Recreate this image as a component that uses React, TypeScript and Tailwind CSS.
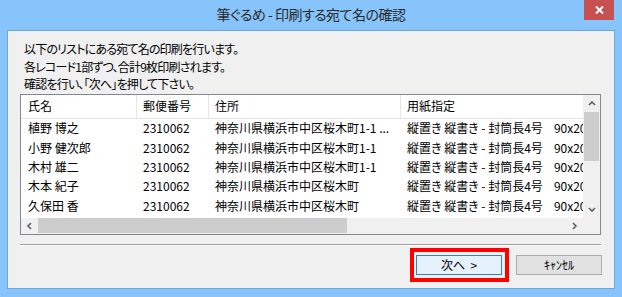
import React from "react";

const rows = [
  { name: "植野 博之", zip: "2310062", addr: "神奈川県横浜市中区桜木町1-1 ..." },
  { name: "小野 健次郎", zip: "2310062", addr: "神奈川県横浜市中区桜木町1-1" },
  { name: "木村 雄二", zip: "2310062", addr: "神奈川県横浜市中区桜木町1-1" },
  { name: "木本 紀子", zip: "2310062", addr: "神奈川県横浜市中区桜木町" },
  { name: "久保田 香", zip: "2310062", addr: "神奈川県横浜市中区桜木町" },
];

function Chevron({ dir }: { dir: "up" | "down" | "left" | "right" }) {
  const d =
    dir === "up"
      ? "M1 5 L4 2 L7 5"
      : dir === "down"
      ? "M1 2 L4 5 L7 2"
      : dir === "left"
      ? "M5 1 L2 4 L5 7"
      : "M2 1 L5 4 L2 7";
  const w = dir === "up" || dir === "down" ? 8 : 7;
  const h = dir === "up" || dir === "down" ? 7 : 8;
  return (
    <svg width={w} height={h} viewBox={`0 0 ${w} ${h}`}>
      <path d={d} fill="none" stroke="#606060" strokeWidth="1.6" />
    </svg>
  );
}

export default function App() {
  return (
    <div className="w-[622px] h-[297px] bg-[#86c4fb] flex flex-col font-['Noto_Sans_CJK_JP','Noto_Sans',sans-serif] [font-feature-settings:'palt'] overflow-hidden">
      <div className="h-[30px] relative flex items-start justify-center">
        <span className="text-[14px] leading-[15px] mt-[7px] text-[#2b2b2b] tracking-[-0.5px]">筆ぐるめ - 印刷する宛て名の確認</span>
        <div className="absolute right-[8px] top-0 w-[30px] h-[20px] bg-[#c75050] flex items-center justify-center">
          <svg width="9" height="8" viewBox="0 0 9 8">
            <path d="M1 0.5 L8 7.5 M8 0.5 L1 7.5" stroke="#ffffff" strokeWidth="2" />
          </svg>
        </div>
      </div>
      <div className="mx-[7px] mb-[8px] flex-1 bg-[#f0f0f0] border border-[#6fa7db] flex flex-col text-[12px] text-black">
        <div className="pl-[16px] pt-[9px] leading-[17.5px] tracking-[-0.8px]">
          <div>以下のリストにある宛て名の印刷を行います。</div>
          <div>各レコード1部ずつ、合計9枚印刷されます。</div>
          <div>確認を行い、「次へ」を押して下さい。</div>
        </div>
        <div className="ml-[12px] mr-[13px] mt-[1px] h-[141px] border border-[#828790] bg-white flex flex-col">
          <div className="flex flex-1 min-h-0">
            <div className="flex-1 min-w-0 overflow-hidden flex flex-col">
              <div className="flex h-[24px] border-b border-[#e5e5e5] shrink-0">
                <div className="w-[116px] shrink-0 border-r border-[#e5e5e5] pl-[7px] flex items-center">氏名</div>
                <div className="w-[72px] shrink-0 border-r border-[#e5e5e5] pl-[6px] flex items-center">郵便番号</div>
                <div className="w-[192px] shrink-0 border-r border-[#e5e5e5] pl-[6px] flex items-center">住所</div>
                <div className="flex-1 pl-[6px] flex items-center whitespace-nowrap">用紙指定</div>
              </div>
              {rows.map((r, i) => (
                <div key={i} className="flex h-[19.4px] items-center shrink-0 whitespace-nowrap">
                  <div className="w-[116px] shrink-0 pl-[7px]">{r.name}</div>
                  <div className="w-[72px] shrink-0 pl-[6px]">{r.zip}</div>
                  <div className="w-[192px] shrink-0 pl-[6px] overflow-hidden">{r.addr}</div>
                  <div className="flex-1 pl-[6px] overflow-hidden">
                    <span>縦置き 縦書き - 封筒長4号</span>
                    <span className="ml-[11px]">90x205mm</span>
                  </div>
                </div>
              ))}
            </div>
            <div className="w-[17px] shrink-0 bg-[#f0f0f0] flex flex-col">
              <div className="h-[17px] flex items-center justify-center">
                <Chevron dir="up" />
              </div>
              <div className="mx-[1px] h-[49px] bg-[#cdcdcd]" />
              <div className="flex-1" />
              <div className="h-[17px] flex items-center justify-center">
                <Chevron dir="down" />
              </div>
            </div>
          </div>
          <div className="h-[16px] shrink-0 flex bg-[#f0f0f0]">
            <div className="flex-1 flex items-center">
              <div className="w-[17px] h-full flex items-center justify-center">
                <Chevron dir="left" />
              </div>
              <div className="w-[309px] h-[15px] bg-[#cdcdcd]" />
              <div className="flex-1" />
              <div className="w-[17px] h-full flex items-center justify-center">
                <Chevron dir="right" />
              </div>
            </div>
            <div className="w-[17px] bg-[#f0f0f0]" />
          </div>
        </div>
        <div className="ml-[12px] mr-[13px] mt-[9px] border-t border-[#a0a0a0] border-b border-b-white" />
        <div className="flex justify-end gap-[14px] mt-[9px] mr-[12px]">
          <div className="relative">
            <button className="w-[86px] h-[20px] border border-[#3c7fb1] bg-[#e5f1fb] flex items-center justify-center text-[12px] leading-none text-black">
              次へ&nbsp;&nbsp;&gt;
            </button>
            <div className="absolute left-[-6px] top-[-7px] w-[99px] h-[34px] border-[4px] border-[#ff0000] pointer-events-none" />
          </div>
          <button className="w-[86px] h-[20px] border border-[#acacac] bg-[#e1e1e1] flex items-center justify-center text-[12px] leading-none text-black">
            ｷｬﾝｾﾙ
          </button>
        </div>
      </div>
    </div>
  );
}
